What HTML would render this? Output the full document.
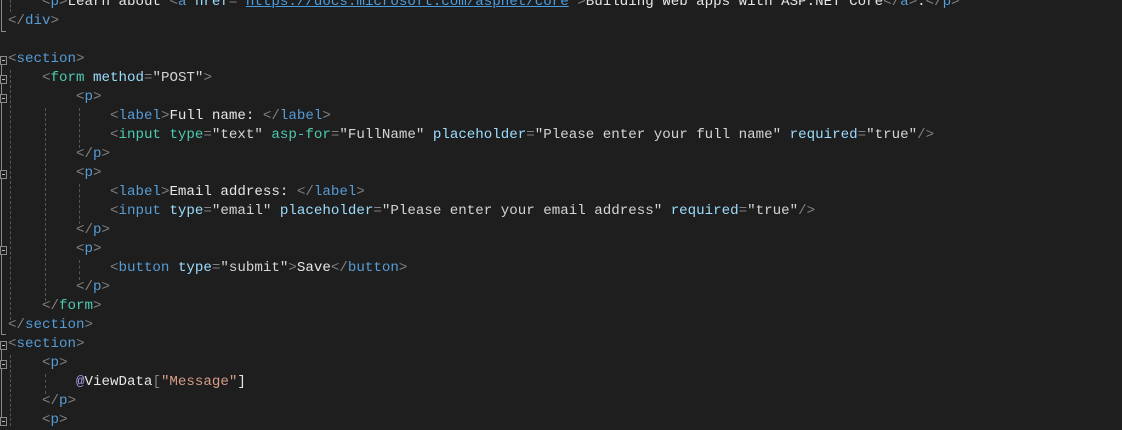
<!DOCTYPE html>
<html><head><style>
body{margin:0;width:1122px;height:426px;background:#1e1e1e;overflow:hidden;position:relative;font-family:"Liberation Mono",monospace;font-size:14.17px;}
.c{position:absolute;left:0;top:3px;width:1122px;height:426px;}
.l{position:absolute;left:8px;height:19px;line-height:19px;white-space:pre;color:#e6e6e6;}
.b{color:#808080}.t{color:#569cd6}.h{color:#4ec9b0}.a{color:#9cdcfe}.s{color:#d4d4d4}
.u{color:#4a9ee0;text-decoration:underline}.cs{color:#d69d85}.at{color:#a699e6}
.g{position:absolute;width:0;border-left:1px dashed #555;}
.v{position:absolute;left:1px;width:0;border-left:1px solid #8a8a8a;}
.bx{position:absolute;left:0;width:5px;height:7px;border:1px solid #8a8a8a;background:#1e1e1e;}
.bx:after{content:"";position:absolute;left:1px;top:3px;width:3px;height:1px;background:#bbb}
.tk{position:absolute;left:1px;width:5px;height:0;border-top:1px solid #8a8a8a}
</style></head><body><div class="c">
<div class="v" style="top:-3px;height:32px"></div><div class="tk" style="top:28px"></div>
<div class="v" style="top:55px;height:277px"></div><div class="tk" style="top:331px"></div>
<div class="v" style="top:341px;height:82px"></div>
<div class="bx" style="top:53px"></div>
<div class="bx" style="top:72px"></div>
<div class="bx" style="top:91px"></div>
<div class="bx" style="top:167px"></div>
<div class="bx" style="top:243px"></div>
<div class="bx" style="top:338px"></div>
<div class="bx" style="top:357px"></div>
<div class="bx" style="top:414px"></div>
<div class="g" style="left:10px;top:-3px;height:12px"></div>
<div class="g" style="left:10px;top:67px;height:250px"></div>
<div class="g" style="left:45px;top:105px;height:193px"></div>
<div class="g" style="left:79px;top:105px;height:40px"></div>
<div class="g" style="left:79px;top:181px;height:40px"></div>
<div class="g" style="left:79px;top:257px;height:20px"></div>
<div class="g" style="left:10px;top:352px;height:71px"></div>
<div class="g" style="left:45px;top:371px;height:20px"></div>

<div class="l" style="top:-10px">    <span class="b">&lt;</span><span class="t">p</span><span class="b">&gt;</span>Learn about <span class="b">&lt;</span><span class="t">a</span> <span class="a">href</span><span class="b">=</span><span class="s">"</span><span class="u">https://docs.microsoft.com/aspnet/core</span><span class="s">"</span><span class="b">&gt;</span>Building Web apps with ASP.NET Core<span class="b">&lt;/</span><span class="t">a</span><span class="b">&gt;</span>.<span class="b">&lt;/</span><span class="t">p</span><span class="b">&gt;</span></div>
<div class="l" style="top:9px"><span class="b">&lt;/</span><span class="t">div</span><span class="b">&gt;</span></div>
<div class="l" style="top:47px"><span class="b">&lt;</span><span class="t">section</span><span class="b">&gt;</span></div>
<div class="l" style="top:66px">    <span class="b">&lt;</span><span class="h">form</span> <span class="a">method</span><span class="b">=</span><span class="s">"POST"</span><span class="b">&gt;</span></div>
<div class="l" style="top:85px">        <span class="b">&lt;</span><span class="t">p</span><span class="b">&gt;</span></div>
<div class="l" style="top:104px">            <span class="b">&lt;</span><span class="t">label</span><span class="b">&gt;</span>Full name: <span class="b">&lt;/</span><span class="t">label</span><span class="b">&gt;</span></div>
<div class="l" style="top:123px">            <span class="b">&lt;</span><span class="h">input</span> <span class="h">type</span><span class="b">=</span><span class="s">"text"</span> <span class="h">asp-for</span><span class="b">=</span><span class="s">"FullName"</span> <span class="a">placeholder</span><span class="b">=</span><span class="s">"Please enter your full name"</span> <span class="a">required</span><span class="b">=</span><span class="s">"true"</span><span class="b">/&gt;</span></div>
<div class="l" style="top:142px">        <span class="b">&lt;/</span><span class="t">p</span><span class="b">&gt;</span></div>
<div class="l" style="top:161px">        <span class="b">&lt;</span><span class="t">p</span><span class="b">&gt;</span></div>
<div class="l" style="top:180px">            <span class="b">&lt;</span><span class="t">label</span><span class="b">&gt;</span>Email address: <span class="b">&lt;/</span><span class="t">label</span><span class="b">&gt;</span></div>
<div class="l" style="top:199px">            <span class="b">&lt;</span><span class="t">input</span> <span class="a">type</span><span class="b">=</span><span class="s">"email"</span> <span class="a">placeholder</span><span class="b">=</span><span class="s">"Please enter your email address"</span> <span class="a">required</span><span class="b">=</span><span class="s">"true"</span><span class="b">/&gt;</span></div>
<div class="l" style="top:218px">        <span class="b">&lt;/</span><span class="t">p</span><span class="b">&gt;</span></div>
<div class="l" style="top:237px">        <span class="b">&lt;</span><span class="t">p</span><span class="b">&gt;</span></div>
<div class="l" style="top:256px">            <span class="b">&lt;</span><span class="t">button</span> <span class="a">type</span><span class="b">=</span><span class="s">"submit"</span><span class="b">&gt;</span>Save<span class="b">&lt;/</span><span class="t">button</span><span class="b">&gt;</span></div>
<div class="l" style="top:275px">        <span class="b">&lt;/</span><span class="t">p</span><span class="b">&gt;</span></div>
<div class="l" style="top:294px">    <span class="b">&lt;/</span><span class="h">form</span><span class="b">&gt;</span></div>
<div class="l" style="top:313px"><span class="b">&lt;/</span><span class="t">section</span><span class="b">&gt;</span></div>
<div class="l" style="top:332px"><span class="b">&lt;</span><span class="t">section</span><span class="b">&gt;</span></div>
<div class="l" style="top:351px">    <span class="b">&lt;</span><span class="t">p</span><span class="b">&gt;</span></div>
<div class="l" style="top:370px">        <span class="at">@</span>ViewData<span class="b">[</span><span class="cs">"Message"</span>]</div>
<div class="l" style="top:389px">    <span class="b">&lt;/</span><span class="t">p</span><span class="b">&gt;</span></div>
<div class="l" style="top:408px">    <span class="b">&lt;</span><span class="t">p</span><span class="b">&gt;</span></div>
</div></body></html>
